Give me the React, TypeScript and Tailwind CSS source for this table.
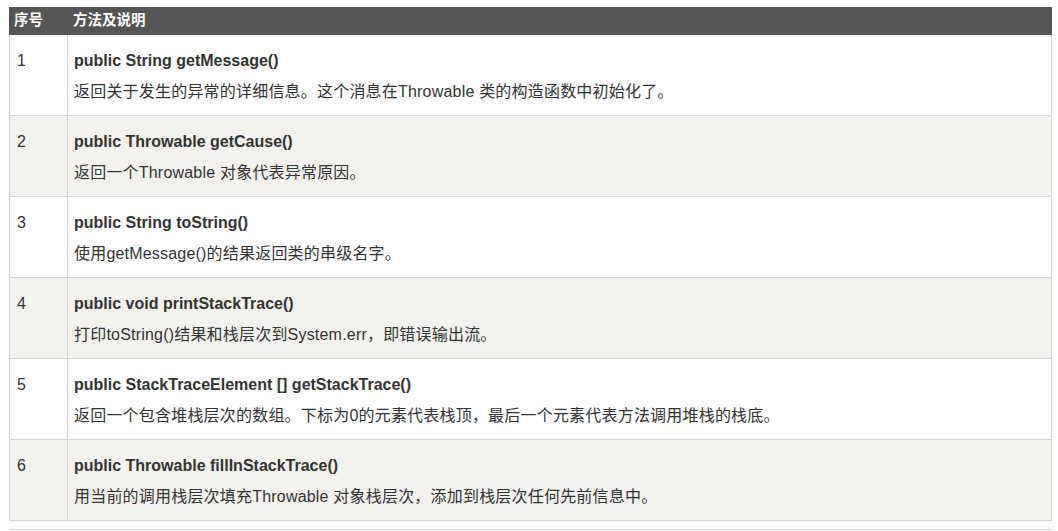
const rows = [
  {
    id: 1,
    sig: 'public String getMessage()',
    desc: '返回关于发生的异常的详细信息。这个消息在Throwable 类的构造函数中初始化了。',
  },
  {
    id: 2,
    sig: 'public Throwable getCause()',
    desc: '返回一个Throwable 对象代表异常原因。',
  },
  {
    id: 3,
    sig: 'public String toString()',
    desc: '使用getMessage()的结果返回类的串级名字。',
  },
  {
    id: 4,
    sig: 'public void printStackTrace()',
    desc: '打印toString()结果和栈层次到System.err，即错误输出流。',
  },
  {
    id: 5,
    sig: 'public StackTraceElement [] getStackTrace()',
    desc: '返回一个包含堆栈层次的数组。下标为0的元素代表栈顶，最后一个元素代表方法调用堆栈的栈底。',
  },
  {
    id: 6,
    sig: 'public Throwable fillInStackTrace()',
    desc: '用当前的调用栈层次填充Throwable 对象栈层次，添加到栈层次任何先前信息中。',
  },
];

export default function App() {
  return (
    <div
      className="min-h-[531px] bg-white pl-[9px] pt-[7px] text-[#333]"
      style={{ fontFamily: '"Liberation Sans", Arial, "Noto Sans CJK SC", sans-serif' }}
    >
      <div className="w-[1043px]">
        <div className="flex h-[28px] items-center bg-[#555555] text-[14.5px] font-bold text-white">
          <div className="w-[59px] pl-[5px]">序号</div>
          <div className="flex-1 pl-[5px]">方法及说明</div>
        </div>

        {rows.map((row, i) => (
          <div
            key={row.id}
            className={`flex h-[81px] border-x border-b border-[#d4d4d4] ${i % 2 === 1 ? 'bg-[#f3f2ee]' : 'bg-white'}`}
          >
            <div className="w-[58px] shrink-0 border-r border-[#d4d4d4] pl-[7px] pt-[14px] text-[16px] leading-[24px]">
              {row.id}
            </div>
            <div className="flex-1 pl-[6px] pt-[14px] text-[16px] leading-[24px]">
              <p className="font-bold">{row.sig}</p>
              <p className="mt-[7px] tracking-[0.2px]">{row.desc}</p>
            </div>
          </div>
        ))}

        <div className="mt-[8px] h-px bg-[#d9d9d9]" />
      </div>
    </div>
  );
}
